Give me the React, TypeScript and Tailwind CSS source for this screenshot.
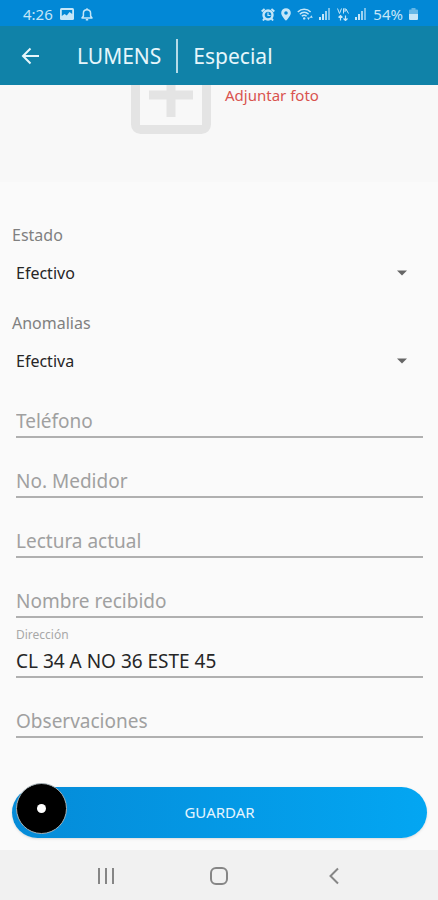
import { useState } from "react";

const FIELDS = [
  { id: "telefono", label: "Teléfono", initial: "" },
  { id: "medidor", label: "No. Medidor", initial: "" },
  { id: "lectura", label: "Lectura actual", initial: "" },
  { id: "nombre", label: "Nombre recibido", initial: "" },
  { id: "direccion", label: "Dirección", initial: "CL 34 A NO 36 ESTE 45" },
  { id: "observaciones", label: "Observaciones", initial: "" },
];

function Signal() {
  return (
    <svg width="12" height="12" viewBox="0 0 12 12" fill="currentColor">
      <rect x="0" y="9" width="2" height="3" />
      <rect x="3" y="6" width="2" height="6" />
      <rect x="6" y="3" width="2" height="9" opacity="0.8" />
      <rect x="9" y="0" width="2" height="12" opacity="0.6" />
    </svg>
  );
}

function StatusBar() {
  return (
    <div className="flex h-[26px] items-center justify-between bg-[#0288d6] pt-[2px] pr-5 pl-[23px] text-[#c5e6f8]">
      <div className="flex items-center gap-[7px]">
        <span className="text-[15px] leading-5">4:26</span>
        <svg width="14" height="12" viewBox="0 0 14 12">
          <rect width="14" height="12" rx="1.5" fill="currentColor" />
          <path d="M1.8 2h10.4v4L9.5 4 6.8 7.5 4.5 6 1.8 8z" fill="#0288d6" />
        </svg>
        <svg width="12" height="13" viewBox="0 0 12 13" fill="none" stroke="currentColor" strokeWidth="1.5">
          <path d="M1 10h10L9.6 8V5.2C9.6 3 8 1.8 6 1.8S2.4 3 2.4 5.2V8z" strokeLinejoin="round" />
          <path d="M6 .3v1.5M4.8 11.8h2.4" />
        </svg>
      </div>
      <div className="flex items-center gap-[6px]">
        <svg width="14" height="13" viewBox="0 0 14 13" fill="none" stroke="currentColor">
          <circle cx="7" cy="7" r="4.5" strokeWidth="2.4" />
          <path d="M.7 3.5 3.6 1M13.3 3.5 10.4 1M3.5 10.5 2 12.5M10.5 10.5l1.5 2" strokeWidth="2" />
          <path d="M7 4.5v3h2.5" strokeWidth="1.2" />
        </svg>
        <svg width="10" height="13" viewBox="0 0 10 13">
          <path
            fillRule="evenodd"
            d="M5 .2A4.8 4.8 0 0 0 .2 5c0 3.2 4.8 7.8 4.8 7.8S9.8 8.2 9.8 5A4.8 4.8 0 0 0 5 .2zM5 3.200a1.800 1.800 0 1 1 0 3.600 1.800 1.800 0 0 1 0-3.600z"
            fill="currentColor"
          />
        </svg>
        <svg width="16" height="13" viewBox="0 0 16 13" fill="none" stroke="currentColor" strokeWidth="1.5">
          <path d="M.8 4c3.600-3.600 9.200-3.600 12.800 0M2.800 6.200c2.500-2.500 6.300-2.500 8.800 0M4.800 8.300c1.400-1.400 3.400-1.400 4.800 0" />
          <circle cx="7.2" cy="10.4" r="1.2" fill="currentColor" stroke="none" />
          <path d="M10 9.500l1.500 2.500L13 9.500zM12.800 9.800l1.500-2.500 1.500 2.500z" fill="currentColor" stroke="none" />
        </svg>
        <Signal />
        <svg width="12" height="13" viewBox="0 0 12 13" fill="none" stroke="currentColor">
          <path d="M.5.5l2 5 2-5M6.500.5v5M6.500 1H9v2H6.500M9 1l2.500 4.500" />
          <path d="M3.500 12.500v-5M1.500 9.500l2-2 2 2M8.500 7.500v5M6.500 10.500l2 2 2-2" strokeWidth="1.2" />
        </svg>
        <Signal />
        <span className="text-[15px] leading-5">54%</span>
        <svg width="9" height="12" viewBox="0 0 9 12">
          <path d="M2.500 0h4v1.500H8A1 1 0 0 1 9 2.500V6H0V2.500a1 1 0 0 1 1-1h1.500z" fill="currentColor" opacity="0.5" />
          <path d="M0 6h9v5a1 1 0 0 1-1 1H1a1 1 0 0 1-1-1z" fill="currentColor" />
        </svg>
      </div>
    </div>
  );
}

function Header() {
  return (
    <header className="flex h-[59px] items-center bg-[#1082a8] pl-[21px] text-[21px] leading-7 text-[#e6f6fb]">
      <button type="button" aria-label="Volver" className="mr-[37px]">
        <svg width="19" height="18" viewBox="0 0 19 18" fill="none" stroke="currentColor" strokeWidth="2">
          <path d="M18 9H2M9.500 1.500 2 9l7.500 7.500" />
        </svg>
      </button>
      <h1 className="flex items-center">
        <span>LUMENS</span>
        <span className="mx-[15px] h-[34px] w-[2px] bg-[#b5dbe8]" />
        <span>Especial</span>
      </h1>
    </header>
  );
}

function PhotoSection() {
  return (
    <button type="button" className="flex h-[97px] w-full items-start gap-[14px] overflow-hidden bg-[#f8f8f8] pl-[131px]">
      <svg className="mt-[-31px] shrink-0" width="80" height="80" viewBox="0 0 80 80" fill="none" stroke="#e4e4e4">
        <rect x="4.5" y="4.5" width="71" height="71" rx="5" strokeWidth="9" />
        <path d="M18 41h44M40 18v45" strokeWidth="9" />
      </svg>
      <span className="text-[15px] leading-5 text-[#d9534f]">Adjuntar foto</span>
    </button>
  );
}

function Dropdown({ id, label, value }: { id: string; label: string; value: string }) {
  return (
    <div className="h-[88px]">
      <label htmlFor={id} className="block px-3 text-[16px] leading-6 text-[#808080]">
        {label}
      </label>
      <div className="relative mt-[14px]">
        <select
          id={id}
          defaultValue={value}
          className="block h-6 w-full appearance-none bg-transparent pr-12 pl-4 text-[16px] leading-6 text-[#262626]"
        >
          <option>{value}</option>
        </select>
        <svg className="pointer-events-none absolute top-[9px] right-[31px]" width="10" height="6" viewBox="0 0 10 6">
          <path d="M0 .5h10L5 5.500z" fill="#666" />
        </svg>
      </div>
    </div>
  );
}

function Field({ id, label, initial }: { id: string; label: string; initial: string }) {
  const [value, setValue] = useState(initial);

  return (
    <div className="flex h-[60px] flex-col justify-end border-b-2 border-[#b0b0b0]">
      {value && (
        <label htmlFor={id} className="text-[12px] leading-4 text-[#a8a8a8]">
          {label}
        </label>
      )}
      <input
        id={id}
        type="text"
        value={value}
        placeholder={label}
        aria-label={label}
        onChange={(e) => setValue(e.target.value)}
        className="mt-1 mb-px h-7 w-full bg-transparent text-[19px] leading-7 text-[#262626] outline-none placeholder:text-[#a0a0a0]"
      />
    </div>
  );
}

function NavBar() {
  return (
    <nav className="flex h-[50px] items-center justify-center gap-[95px] bg-[#f1f1f1] pt-px text-[#868686]">
      <button type="button" aria-label="Recientes">
        <svg width="20" height="18" viewBox="0 0 20 18" fill="none" stroke="currentColor" strokeWidth="2">
          <path d="M5 1v16M12 1v16M19 1v16" />
        </svg>
      </button>
      <button type="button" aria-label="Inicio">
        <svg width="20" height="20" viewBox="0 0 20 20" fill="none" stroke="currentColor" strokeWidth="2">
          <rect x="2" y="2" width="16" height="16" rx="5" />
        </svg>
      </button>
      <button type="button" aria-label="Atrás">
        <svg width="20" height="18" viewBox="0 0 20 18" fill="none" stroke="currentColor" strokeWidth="2">
          <path d="M14 1.500 6.500 9l7.500 7.500" />
        </svg>
      </button>
    </nav>
  );
}

export default function App() {
  return (
    <div className="flex min-h-screen flex-col bg-[#fafafa] font-['Noto_Sans',sans-serif]">
      <StatusBar />
      <Header />
      <main className="flex flex-1 flex-col">
        <PhotoSection />
        <form className="flex flex-1 flex-col pt-[41px]" onSubmit={(e) => e.preventDefault()}>
          <Dropdown id="estado" label="Estado" value="Efectivo" />
          <Dropdown id="anomalias" label="Anomalias" value="Efectiva" />
          <div className="mt-[-21px] pr-[15px] pl-4">
            {FIELDS.map((f) => (
              <Field key={f.id} {...f} />
            ))}
          </div>
          <div className="relative mt-auto mb-3 pr-[11px] pl-3">
            <button
              type="submit"
              className="block h-[51px] w-full rounded-full bg-linear-to-r from-[#058bd8] to-[#03a6f2] text-[15px] text-[#e4f5fe] shadow-sm"
            >
              GUARDAR
            </button>
            <button
              type="button"
              aria-label="Grabar"
              className="absolute top-[-4px] left-4 flex size-[51px] items-center justify-center rounded-full border border-[#a5b0b5] bg-black"
            >
              <span className="size-[9px] rounded-full bg-white" />
            </button>
          </div>
        </form>
      </main>
      <NavBar />
    </div>
  );
}
